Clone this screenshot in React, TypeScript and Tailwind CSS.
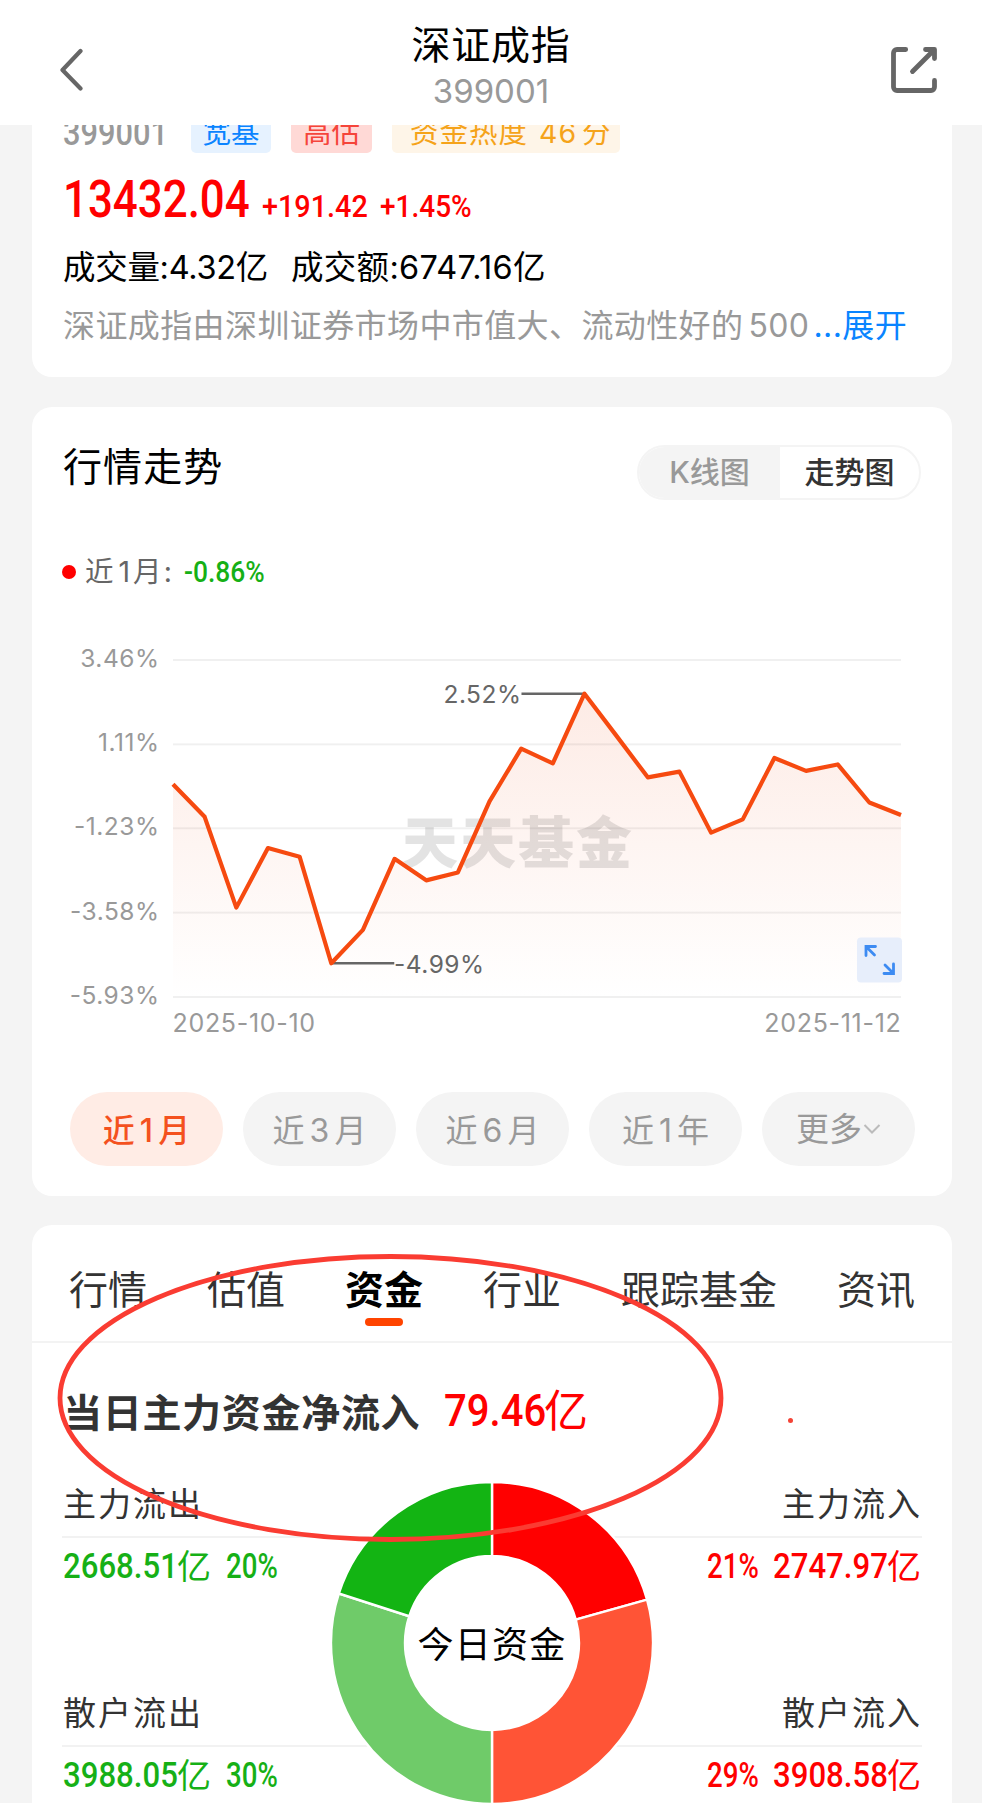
import React from 'react';

const changes = [
  0, -0.91, -3.44, -1.78, -2.02, -4.99, -4.06, -2.08, -2.68, -2.46, -0.48, 0.99, 0.58, 2.52, 1.36, 0.19, 0.35, -1.35,
  -0.98, 0.73, 0.37, 0.55, -0.51, -0.86,
];
const ticks = [3.46, 1.11, -1.23, -3.58, -5.93];
const ranges = [
  { count: 1, unit: '月' },
  { count: 3, unit: '月' },
  { count: 6, unit: '月' },
  { count: 1, unit: '年' },
];
const tabs = ['行情', '估值', '资金', '行业', '跟踪基金', '资讯'];

const flows = [
  { label: '主力流出', amount: '2668.51', percent: '20%', out: true },
  { label: '主力流入', amount: '2747.97', percent: '21%', out: false },
  { label: '散户流出', amount: '3988.05', percent: '30%', out: true },
  { label: '散户流入', amount: '3908.58', percent: '29%', out: false },
];

// plot area inside the chart svg
const left = 111;
const right = 839;
const top = 20;
const bottom = 357;

const toX = (i: number) => left + ((right - left) * i) / (changes.length - 1);
const toY = (v: number) => top + ((ticks[0] - v) / (ticks[0] - ticks[4])) * (bottom - top);

// condensed digits, the box keeps the squeezed width
const Num = ({ children, className = '', box }: { children: React.ReactNode; className?: string; box: string }) => (
  <span className={`inline-block whitespace-nowrap ${box}`}>
    <span className={`inline-block origin-left font-medium [font-family:Roboto,sans-serif] ${className}`}>
      {children}
    </span>
  </span>
);

const Header = () => (
  <header className="relative flex h-[125px] items-center justify-between bg-white pr-[45px] pl-[60px] pt-[14px]">
    <svg className="h-[44px] w-[24px]" viewBox="0 0 24 44" fill="none" stroke="#666" strokeWidth="4.2" strokeLinecap="round" strokeLinejoin="round">
      <path d="M20.500 3 2.500 22 20.500 40.500" />
    </svg>
    <div className="absolute inset-x-0 top-[21px] flex flex-col items-center">
      <h1 className="h-[48px] text-[39px] leading-[48px] tracking-[0.8px] text-black">深证成指</h1>
      <span className="mt-[5px] h-[34px] text-[33px] leading-[34px] text-[#999]">399001</span>
    </div>
    <svg className="h-[46px] w-[46px]" viewBox="0 0 46 46" fill="none" stroke="#666" strokeWidth="4.8" strokeLinecap="round" strokeLinejoin="round">
      <path d="M14.700 2.500H6a3.500 3.500 0 0 0-3.500 3.500v34A3.500 3.500 0 0 0 6 43.500h34a3.500 3.500 0 0 0 3.500-3.500v-6.500" />
      <path d="M34.500 2.500h9v9M42 4 21.500 24.500" />
    </svg>
  </header>
);

const Summary = () => (
  <section className="h-[252px] rounded-b-[20px] bg-white px-[31px]">
    <div className="flex h-7 items-end overflow-hidden text-[28.5px] leading-[44px]">
      <Num box="w-[128px] h-[42px]" className="scale-x-[0.88] text-[35px] text-[#999] leading-[46px]">
        399001
      </Num>
      <span className="h-[42px] w-[80px] shrink-0 rounded-[5px] bg-[#e6f2ff] text-center text-[#0a84ff]">宽基</span>
      <span className="ml-5 h-[42px] w-[81px] shrink-0 rounded-[5px] bg-[#ffd9d6] text-center text-[#f5453a]">高估</span>
      <span className="ml-5 h-[42px] w-[228px] shrink-0 rounded-[5px] bg-[#fef5e8] pl-[18px] tracking-[1px] whitespace-nowrap text-[#f5a31a]">
        资金热度<span className="mr-[5px] ml-[11px]">46</span>分
      </span>
    </div>
    <div className="flex h-[90px] items-center pt-[3px] text-[#ff0000]">
      <Num box="w-[199px]" className="scale-x-[0.86] text-[51px]">
        13432.04
      </Num>
      <Num box="w-[118px] pt-[13px]" className="scale-x-90 text-[32px]">
        +191.42
      </Num>
      <Num box="w-[100px] pt-[13px]" className="scale-x-[0.875] text-[32px]">
        +1.45%
      </Num>
    </div>
    <div className="flex h-[50px] items-center text-[32.5px] text-black">
      <span className="w-[228px] tracking-[-0.3px] whitespace-nowrap">成交量:4.32亿</span>
      <span className="tracking-[0.3px]">成交额:6747.16亿</span>
    </div>
    <div className="flex h-16 items-center pt-[2px] text-[32px] tracking-[0.4px] whitespace-nowrap text-[#999]">
      <span>深证成指由深圳证券市场中市值大、流动性好的</span>
      <span className="ml-[5px]">500</span>
      <span className="ml-1 text-[#0a84ff]">...展开</span>
    </div>
  </section>
);

const TrendChart = () => {
  const line = changes.map((v, i) => `${toX(i)},${toY(v)}`).join(' ');

  return (
    <svg className="mt-12 h-[405px] w-[860px] [font-family:Inter,sans-serif]" viewBox="0 0 860 405">
      <defs>
        <linearGradient id="area" gradientUnits="userSpaceOnUse" x1="0" y1="53" x2="0" y2="357">
          <stop offset="0" stopColor="#fdebe5" />
          <stop offset="1" stopColor="#ffffff" />
        </linearGradient>
      </defs>
      <polygon points={`${left},${bottom} ${line} ${right},${bottom}`} fill="url(#area)" />
      {ticks.map((t) => (
        <g key={t}>
          <rect x={left} y={toY(t) - 1} width={right - left} height="2" fill="#000" fillOpacity="0.06" />
          <text x="97.500" y={toY(t) + 7} textAnchor="end" fontSize="24.500" letterSpacing="0.5" fill="#999">
            {t.toFixed(2)}%
          </text>
        </g>
      ))}
      <text
        x="340"
        y="223"
        fontSize="56"
        fontWeight="900"
        textLength="230"
        fill="#000"
        fillOpacity="0.11"
        className="[font-family:'Noto_Sans_CJK_SC',sans-serif]"
      >
        天天基金
      </text>
      <g stroke="#666" strokeWidth="2.4">
        <path d={`M${toX(13)} ${toY(2.52)}h-63`} />
        <path d={`M${toX(5)} ${toY(-4.99)}h63`} />
      </g>
      <g fontSize="24.500" letterSpacing="0.5" fill="#666">
        <text x="459.500" y="63" textAnchor="end">
          2.52%
        </text>
        <text x="332" y="333">
          -4.99%
        </text>
      </g>
      <polyline points={line} fill="none" stroke="#f64a10" strokeWidth="4.200" strokeLinejoin="round" />
      <g fontSize="25" letterSpacing="0.7" fill="#999">
        <text x="110.500" y="392">
          2025-10-10
        </text>
        <text x="839.500" y="392" textAnchor="end">
          2025-11-12
        </text>
      </g>
      <rect x="795" y="297.500" width="45" height="45" rx="4" fill="#e7eefb" />
      <g fill="none" stroke="#3d8bf2" strokeWidth="2.800" strokeLinecap="round">
        <path d="M804 315.500v-9h9.500M804.500 307l8 8" />
        <path d="M831.500 324v9.500h-9.500M831 333l-8-8" />
      </g>
    </svg>
  );
};

const Trend = () => (
  <section className="mt-[30px] h-[789px] rounded-[20px] bg-white pt-[38px] pr-[31px] pl-[30px]">
    <div className="flex h-[55px] justify-between">
      <h2 className="mt-px ml-px h-[42px] text-[39px] leading-[42px] tracking-[1.1px] text-black">行情走势</h2>
      <div className="flex w-[284px] overflow-hidden rounded-full border-2 border-[#f4f4f4] text-[30px] leading-[51px]">
        <button className="w-[141px] bg-[#f4f4f4] text-center font-medium text-[#999]">K线图</button>
        <button className="flex-1 text-center font-medium text-[#333]">走势图</button>
      </div>
    </div>
    <div className="mt-[52px] flex h-10 items-center text-[28.5px] text-[#666]">
      <span className="mr-[9px] h-[14px] w-[14px] rounded-full bg-[#ff0000]" />
      <span className="w-[99px] whitespace-nowrap">
        近<span className="mr-[3px] ml-[5px]">1</span>月<span className="ml-0.5">:</span>
      </span>
      <Num box="w-[80px]" className="scale-x-[0.88] text-[30px] text-[#16b016]">
        -0.86%
      </Num>
    </div>
    <TrendChart />
    <div className="mt-[47px] flex justify-between pr-[6px] pl-2 text-[32px] leading-[77px]">
      {ranges.map((r, i) => (
        <button
          key={i}
          className={`h-[74px] w-[153px] rounded-full text-center ${
            i === 0 ? 'bg-[#ffece5] font-medium text-[#f4511e]' : 'bg-[#f4f4f4] text-[#999]'
          }`}
        >
          近<span className="mx-[5px]">{r.count}</span>
          {r.unit}
        </button>
      ))}
      <button className="flex h-[74px] w-[153px] items-center justify-center rounded-full bg-[#f4f4f4] text-[33px] text-[#999]">
        更多
        <svg className="ml-px h-[10px] w-[18px]" viewBox="0 0 18 10" fill="none" stroke="#bbb" strokeWidth="2">
          <path d="M1.500 1 9 8.500 16.500 1" />
        </svg>
      </button>
    </div>
  </section>
);

const Donut = () => {
  const slices = [
    { from: 0, to: 74.4, color: '#ff0000' },
    { from: 74.4, to: 180, color: '#ff5436' },
    { from: 180, to: 287.9, color: '#6fcb69' },
    { from: 287.9, to: 360, color: '#13b413' },
  ];
  const point = (deg: number, r: number) => {
    const a = (deg * Math.PI) / 180;
    return `${161 + r * Math.sin(a)} ${161 - r * Math.cos(a)}`;
  };

  return (
    <svg className="h-[322px] w-[322px]" viewBox="0 0 322 322">
      {slices.map((s) => (
        <path
          key={s.color}
          d={`M${point(s.from, 161)}A161 161 0 0 1 ${point(s.to, 161)}L${point(s.to, 87)}A87 87 0 0 0 ${point(s.from, 87)}Z`}
          fill={s.color}
          stroke="#fff"
          strokeWidth="2.4"
        />
      ))}
    </svg>
  );
};

const Funds = () => (
  <section className="relative mt-[29px] h-[578px] rounded-t-[20px] bg-white">
    <nav className="flex h-[118px] justify-between border-b-2 border-[#f3f3f3] px-[37px] pt-[36px] text-[39px] leading-[58px] text-[#333]">
      {tabs.map((t) => (
        <a key={t} className={t === '资金' ? 'relative font-bold text-black' : ''}>
          {t}
          {t === '资金' && (
            <span className="absolute top-[57px] left-1/2 h-2 w-[38px] -translate-x-1/2 rounded-full bg-[#ff4400]" />
          )}
        </a>
      ))}
    </nav>
    <div className="flex h-[138px] items-center px-[31px]">
      <h2 className="w-[381px] text-[39px] font-bold tracking-[0.7px] whitespace-nowrap text-[#333]">当日主力资金净流入</h2>
      <Num box="w-[100px] -mt-[2px]" className="scale-x-[0.91] text-[44px] text-[#ff0000]">
        79.46
      </Num>
      <span className="-mt-[2px] text-[44px] text-[#ff0000]">亿</span>
      <span className="ml-[200px] mt-[16px] h-[5px] w-[5px] rounded-full bg-[#f44336]" />
    </div>
    <div className="relative h-[322px] overflow-hidden pr-[30px] pl-[30px]">
      <div className="grid grid-cols-2 gap-y-[95px]">
        {flows.map((f) => (
          <div key={f.label} className={f.out ? '' : 'text-right'}>
            <div className="h-[57px] border-b-2 border-[#f2f2f2] pl-px text-[33px] leading-[46px] tracking-[2px] text-[#333]">
              {f.label}
            </div>
            <div
              className={`flex h-[57px] items-center text-[34px] ${
                f.out ? 'pl-px text-[#16b016]' : 'flex-row-reverse pr-px text-[#ff0000]'
              }`}
            >
              <div className="flex items-center">
                <Num box="w-[114px] text-left" className="scale-x-[0.89] text-[35px]">
                  {f.amount}
                </Num>
                <span>亿</span>
              </div>
              <Num box={f.out ? 'ml-[15px] w-[52px] text-left' : 'mr-[14px] w-[52px] text-left'} className="scale-x-[0.79] text-[35px]">
                {f.percent}
              </Num>
            </div>
          </div>
        ))}
      </div>
      <div className="absolute top-[1px] left-[299px] flex items-center justify-center">
        <Donut />
        <span className="absolute pt-[4px] text-[36px] tracking-[1.2px] whitespace-nowrap text-black">今日资金</span>
      </div>
    </div>
    {/* hand-drawn marker around the net inflow */}
    <svg className="pointer-events-none absolute top-[28px] left-[24px] h-[290px] w-[670px]" viewBox="0 0 670 290" fill="none">
      <ellipse cx="334.500" cy="145" rx="330.500" ry="141.500" stroke="#fa3c32" strokeWidth="4.800" />
    </svg>
  </section>
);

const App = () => {
  return (
    <div className="h-[1803px] w-[982px] overflow-hidden bg-[#f4f4f4] leading-none [font-family:Inter,'Noto_Sans_CJK_SC',sans-serif]">
      <Header />
      <main className="mr-[30px] ml-8">
        <Summary />
        <Trend />
        <Funds />
      </main>
    </div>
  );
};

export default App;
